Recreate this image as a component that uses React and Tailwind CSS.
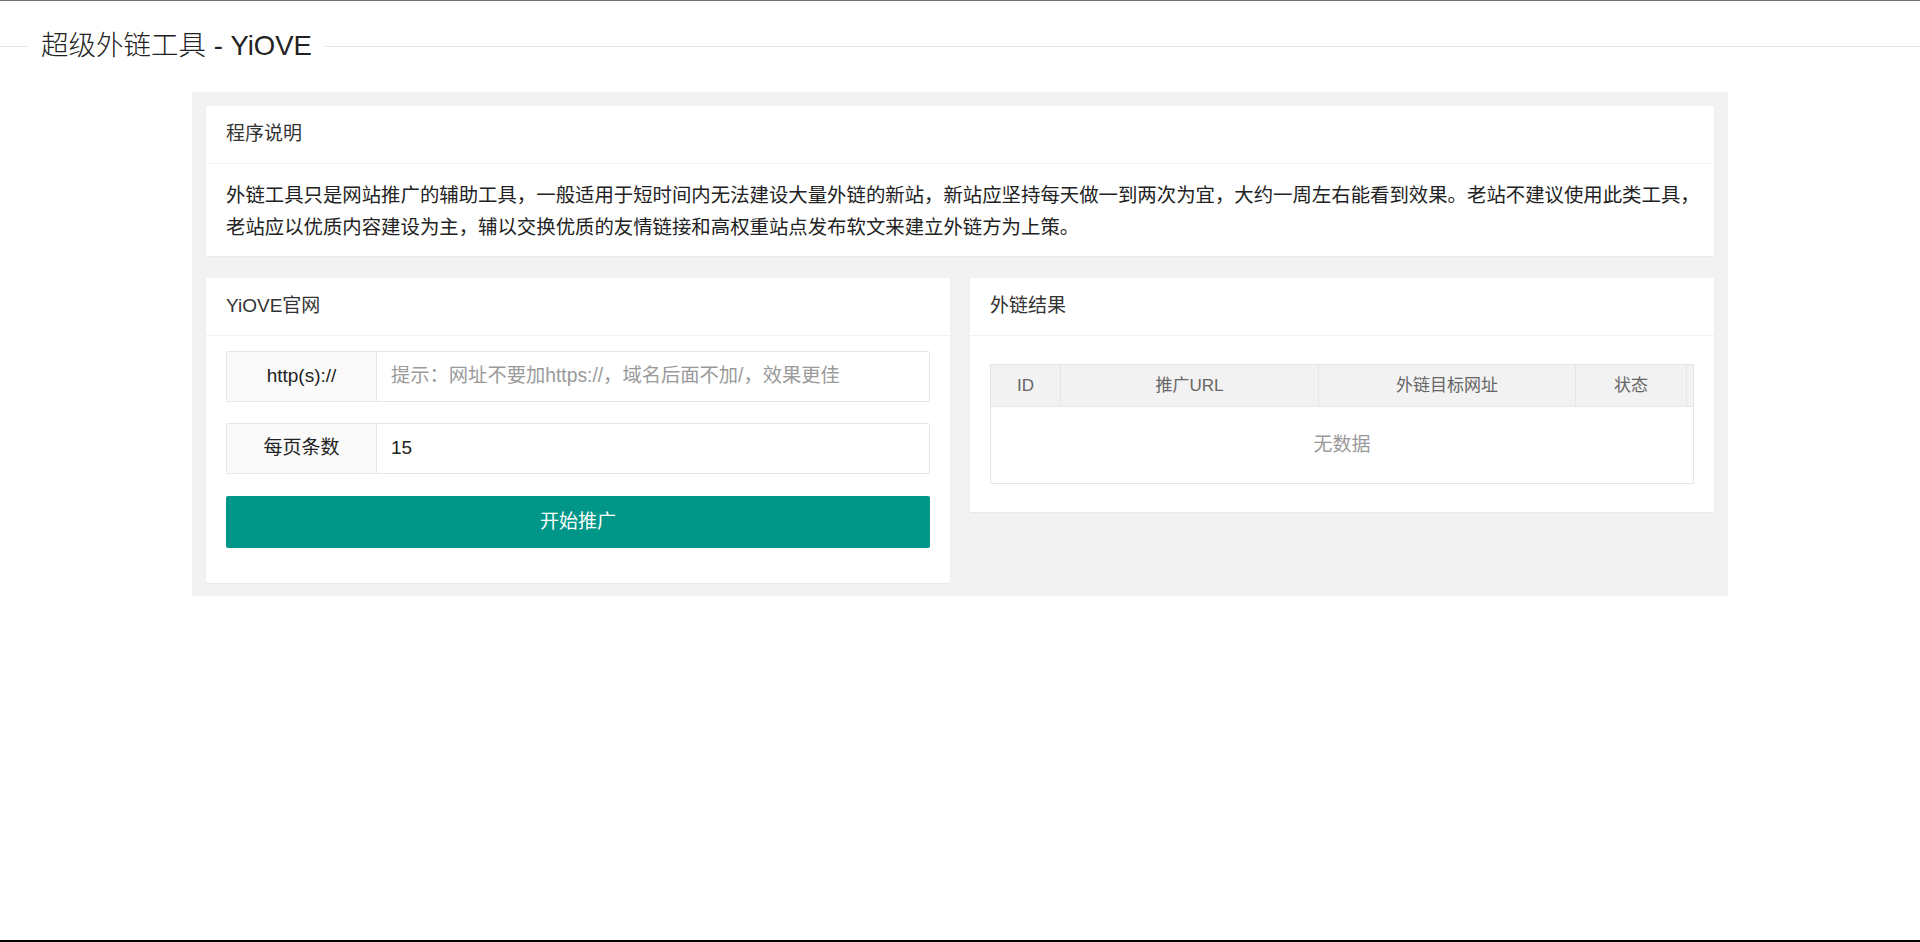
import React from 'react';

const font = { fontFamily: '"Liberation Sans", "Noto Sans CJK SC", sans-serif' };

const Card = ({ title, children, className = '' }) => (
  <div className={`bg-white rounded-[2px] shadow-[0_1px_2px_0_rgba(0,0,0,0.05)] ${className}`}>
    <div className="h-[58px] flex items-center px-[20px] border-b border-[#f2f2f2] text-[19px] text-[#333]">
      {title}
    </div>
    {children}
  </div>
);

const FormRow = ({ label, children, className = '' }) => (
  <div className={`flex h-[51px] border border-[#e6e6e6] rounded-[2px] ${className}`}>
    <div className="w-[150px] shrink-0 flex items-center justify-center bg-[#fafafa] border-r border-[#e6e6e6] text-[19px] text-[#222]">
      {label}
    </div>
    {children}
  </div>
);

const columns = [
  { name: 'ID', w: 'w-[70px]' },
  { name: '推广URL', w: 'w-[258px]' },
  { name: '外链目标网址', w: 'w-[257px]' },
  { name: '状态', w: 'w-[111px]' },
];

const App = () => {
  return (
    <div className="h-screen bg-white border-t border-[#6f6f6f] border-b-2 border-b-black flex flex-col" style={font}>
      {/* title */}
      <div className="flex items-center mt-[27px]">
        <div className="w-[28px] h-px bg-[#e6e6e6]" />
        <div className="px-[13px] text-[27.5px] leading-[36px] font-light text-[#222]">超级外链工具 - YiOVE</div>
        <div className="flex-1 h-px bg-[#e6e6e6]" />
      </div>

      <div className="w-[1536px] mx-auto mt-[28px] bg-[#f2f2f2] px-[14px] pt-[14px] pb-[13px]">
        <Card title="程序说明">
          <div className="px-[20px] pt-[15px] pb-[13px] text-[19.4px] leading-[32px] text-[#222]">
            <div className="whitespace-nowrap">
              外链工具只是网站推广的辅助工具，一般适用于短时间内无法建设大量外链的新站，新站应坚持每天做一到两次为宜，大约一周左右能看到效果。老站不建议使用此类工具，
            </div>
            <div className="whitespace-nowrap">
              老站应以优质内容建设为主，辅以交换优质的友情链接和高权重站点发布软文来建立外链方为上策。
            </div>
          </div>
        </Card>

        <div className="grid grid-cols-2 gap-[20px] mt-[22px] items-start">
          <Card title="YiOVE官网">
            <div className="px-[20px] pt-[15px] pb-[35px]">
              <FormRow label="http(s)://">
                <input
                  className="flex-1 min-w-0 px-[14px] text-[19.3px] text-[#222] outline-none placeholder:text-[#9a9a9a] bg-white"
                  placeholder="提示：网址不要加https://，域名后面不加/，效果更佳"
                  style={font}
                />
              </FormRow>
              <FormRow label="每页条数" className="mt-[21px]">
                <input
                  className="flex-1 min-w-0 px-[14px] text-[19px] text-[#222] outline-none bg-white"
                  defaultValue="15"
                  style={font}
                />
              </FormRow>
              <button className="mt-[22px] w-full h-[52px] bg-[#009688] text-white text-[19px] rounded-[2px]">
                开始推广
              </button>
            </div>
          </Card>

          <Card title="外链结果">
            <div className="px-[20px] py-[28px]">
              <div className="border border-[#e6e6e6]">
                <div className="flex h-[42px] bg-[#f2f2f2] border-b border-[#e6e6e6]">
                  {columns.map((c) => (
                    <div
                      key={c.name}
                      className={`${c.w} shrink-0 flex items-center justify-center border-r border-[#e6e6e6] text-[17px] text-[#666]`}
                    >
                      {c.name}
                    </div>
                  ))}
                  <div className="flex-1" />
                </div>
                <div className="h-[76px] flex items-center justify-center text-[19px] text-[#999]">无数据</div>
              </div>
            </div>
          </Card>
        </div>
      </div>
    </div>
  );
};

export default App;
